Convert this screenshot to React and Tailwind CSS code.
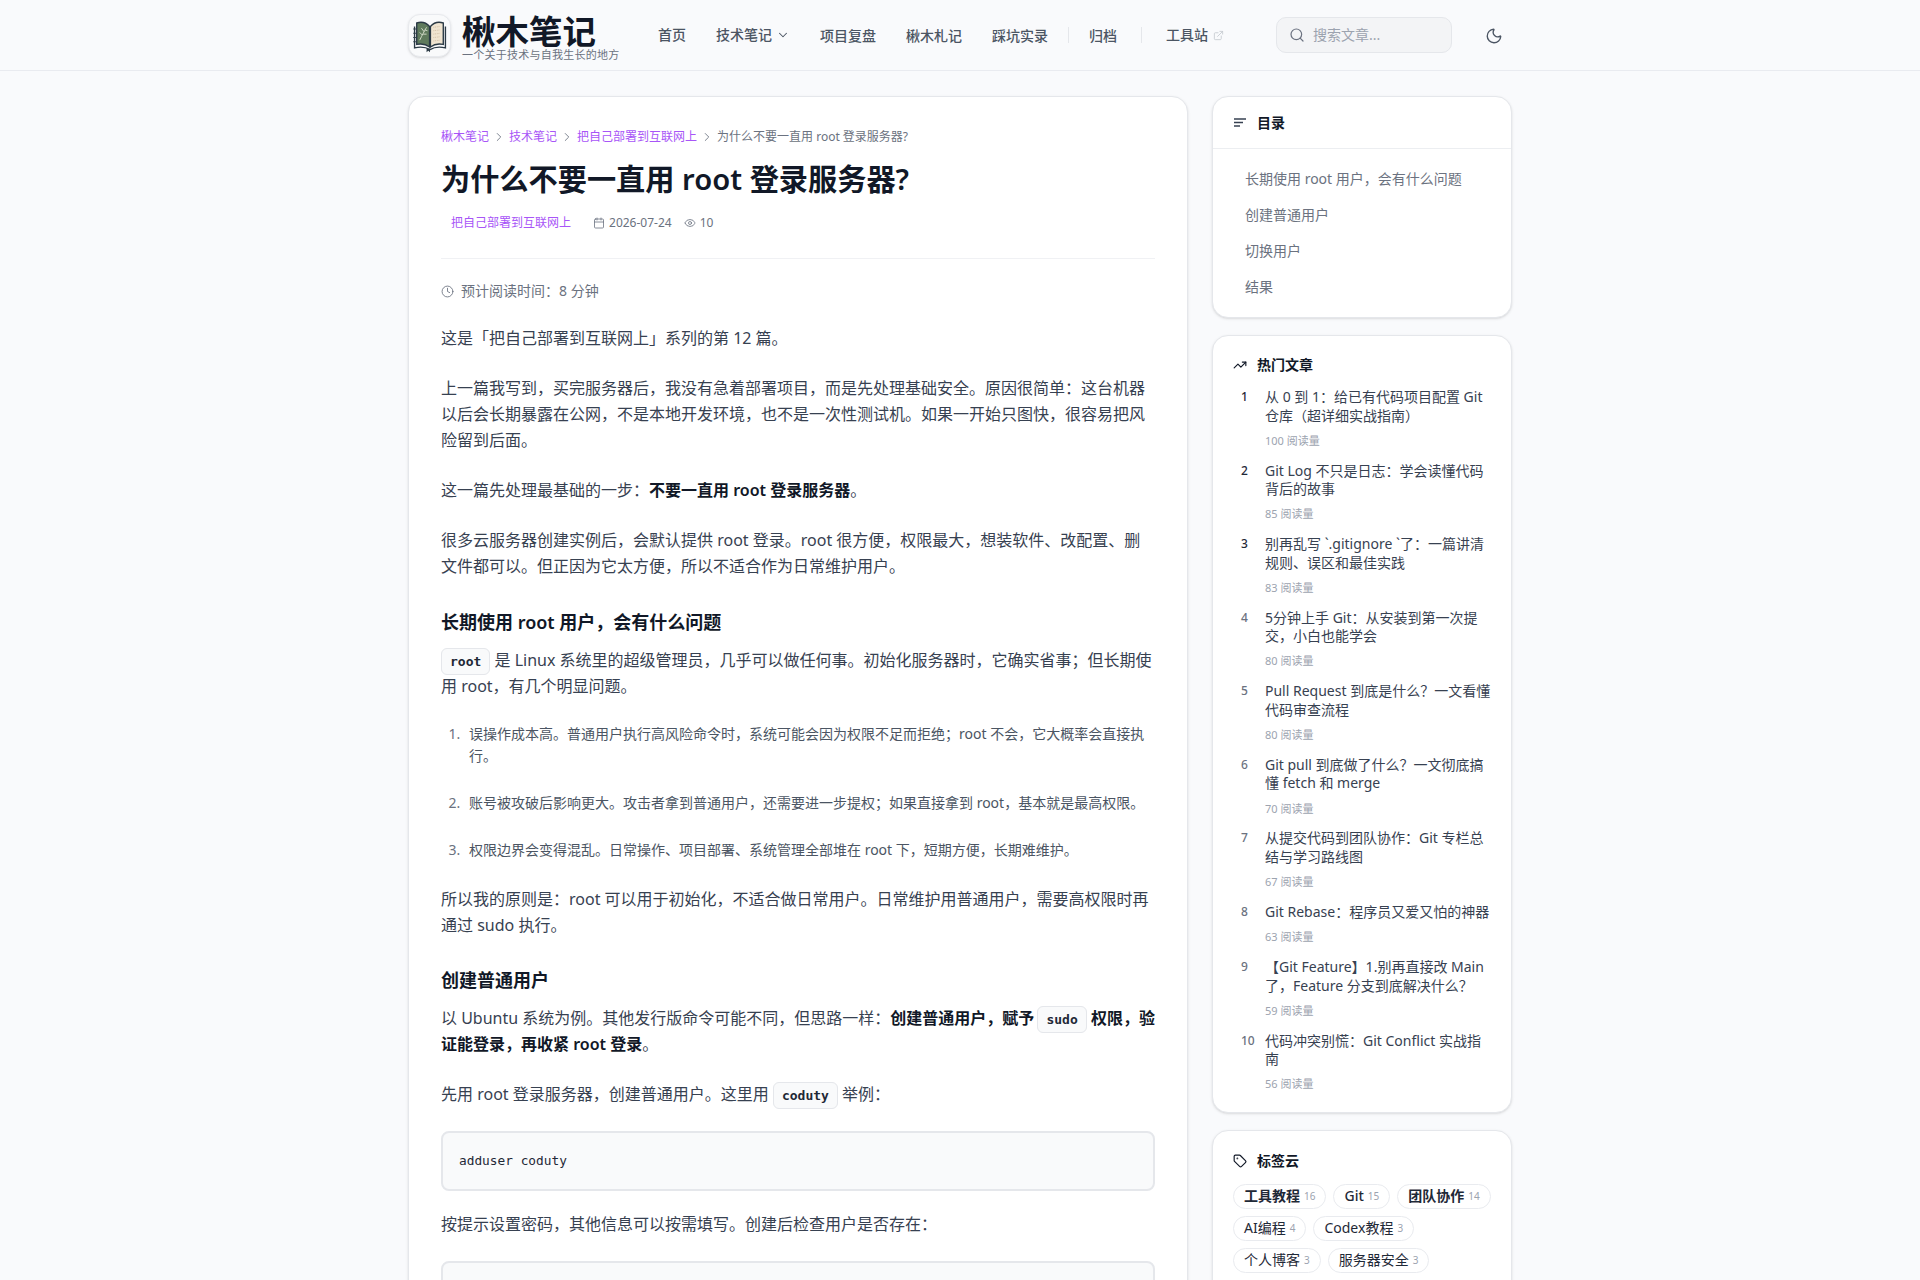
import React from "react";
import { ChevronDown, ChevronRight, ExternalLink, Search, Moon, Calendar, Eye, Clock, TrendingUp, Tag } from "lucide-react";

const FONT = "font-['Noto_Sans','Noto_Sans_CJK_SC',sans-serif]";
const MONO = "font-['DejaVu_Sans_Mono','Noto_Sans_CJK_SC',monospace]";

function Logo() {
  return (
    <svg viewBox="0 0 42 42" className="w-[36px] h-[36px]">
      <path d="M20.5 11 C16 6 10 5.5 5.5 7 L5.5 32 C10 31 16 31.5 20.5 35 Z" fill="#5f7a5c" stroke="#2b3a45" strokeWidth="1.6" />
      <path d="M21.5 11 C26 6 32 5.5 36.5 7 L36.5 32 C32 31 26 31.5 21.5 35 Z" fill="#efe4d0" stroke="#2b3a45" strokeWidth="1.6" />
      <path d="M9 27 C12 21 14 17 17 12" fill="none" stroke="#dfe6d5" strokeWidth="1" />
      <path d="M12 21 L9 18 M14 17 L11 13 M13 20 L17 20 M15 15 L18 16" stroke="#dfe6d5" strokeWidth="1" />
      <path d="M25 12 L33 11 M25 16 L33 15 M25 20 L33 19 M25 24 L33 23 M25 28 L33 27" stroke="#c9b79c" strokeWidth="1" strokeDasharray="1 1" />
      <path d="M3 11 L3 36 C10 34.5 16 35 21 38 C26 35 32 34.5 39 36 L39 11" fill="none" stroke="#2b3a45" strokeWidth="1.6" />
      <path d="M17 37 L17 41 L19 39.5 L21 41 L21 37 Z" fill="#2b3a45" />
      <path d="M1.5 14 L4.5 14 M1.5 19 L4.5 19 M1.5 24 L4.5 24 M1.5 29 L4.5 29" stroke="#2b3a45" strokeWidth="1.2" />
    </svg>
  );
}

function NavItem({ children }) {
  return <a className="text-sm text-[#4b5563] font-medium whitespace-nowrap">{children}</a>;
}

function Header() {
  return (
    <header className="h-[71px] border-b border-[#e9ebf0] bg-[#f9fafc]">
      <div className="w-[1104px] mx-auto h-full flex items-center">
        <div className="w-[43px] h-[43px] rounded-xl border border-[#e8eaee] bg-[#f9fafb] shadow-sm flex items-center justify-center shrink-0">
          <Logo />
        </div>
        <div className="ml-[11px] w-[195px] h-[50px] shrink-0">
          <div className="text-[33.5px] font-bold text-[#111827] leading-[36px] mt-[3px] whitespace-nowrap">楸木笔记</div>
          <div className="text-[11px] text-[#6b7280] leading-[13px] tracking-[0.25px] whitespace-nowrap mt-[-1.5px]">一个关于技术与自我生长的地方</div>
        </div>
        <nav className="flex items-center ml-[1px]">
          <NavItem>首页</NavItem>
          <a className="ml-[30px] flex items-center text-sm text-[#4b5563] font-medium whitespace-nowrap">技术笔记<ChevronDown className="w-[14px] h-[14px] ml-1" strokeWidth={1.8} /></a>
          <span className="ml-[30px]"><NavItem>项目复盘</NavItem></span>
          <span className="ml-[30px]"><NavItem>楸木札记</NavItem></span>
          <span className="ml-[30px]"><NavItem>踩坑实录</NavItem></span>
          <span className="ml-[20px] w-px h-4 bg-[#e5e7eb]" />
          <span className="ml-[20px]"><NavItem>归档</NavItem></span>
          <span className="ml-[24px] w-px h-4 bg-[#e5e7eb]" />
          <a className="ml-[24px] flex items-center text-sm text-[#4b5563] font-medium whitespace-nowrap">工具站<ExternalLink className="w-[11px] h-[11px] ml-[5px] text-[#c4c8cf]" strokeWidth={1.8} /></a>
        </nav>
        <div className="ml-auto flex items-center">
          <div className="w-[176px] h-[36px] rounded-[10px] border border-[#e5e7eb] bg-[#f3f4f6] flex items-center pl-[12px]">
            <Search className="w-4 h-4 text-[#6b7280]" strokeWidth={1.8} />
            <span className="ml-[8px] text-sm text-[#9ca3af]">搜索文章...</span>
          </div>
          <div className="ml-[33px] w-[18px] mr-[9px] mt-[1px] flex items-center justify-center">
            <Moon className="w-[18px] h-[18px] text-[#4b5563]" strokeWidth={1.8} />
          </div>
        </div>
      </div>
    </header>
  );
}

function Code({ children, className = "" }) {
  return (
    <code className={`${MONO} text-[13px] leading-none px-[8px] py-[5px] rounded-md border border-[#e5e7eb] bg-[#f9fafb] text-[#1f2937] font-semibold ${className}`}>{children}</code>
  );
}

function P({ children }) {
  return <p className="text-base leading-[26px] text-[#374151] mb-6">{children}</p>;
}

function H3({ children, className = "mt-[29px]" }) {
  return <h3 className={`text-lg font-semibold leading-7 text-[#111827] mb-[11px] ${className}`}>{children}</h3>;
}

function B({ children }) {
  return <strong className="font-semibold text-[#111827]">{children}</strong>;
}

function Pre({ children }) {
  return (
    <pre className={`${MONO} h-[60px] text-[12.8px] leading-[20px] text-[#1f2937] bg-[#f9fafb] border-2 border-[#e5e7eb] rounded-lg px-4 py-[18px] mb-[20px]`}>{children}</pre>
  );
}

function Li({ children, last }) {
  return <li className={`pl-[5px] ${last ? "" : "mb-[25px]"}`}>{children}</li>;
}

function Article() {
  const crumbs = ["楸木笔记", "技术笔记", "把自己部署到互联网上"];
  return (
    <article className="w-[780px] shrink-0 bg-white border border-[#e5e7eb] rounded-2xl shadow-sm px-8 pt-8">
      <nav className="flex items-center text-xs leading-4 text-[#6b7280]">
        {crumbs.map((c) => (
          <React.Fragment key={c}>
            <a className="text-[#a855f7]">{c}</a>
            <ChevronRight className="w-[14px] h-[14px] mx-[3px]" strokeWidth={1.5} />
          </React.Fragment>
        ))}
        <span>为什么不要一直用 root 登录服务器?</span>
      </nav>
      <h1 className="text-[29.2px] leading-9 font-semibold text-[#111827] mt-[16px]">为什么不要一直用 root 登录服务器?</h1>
      <div className="flex items-center text-xs leading-4 text-[#6b7280] mt-[18px] pb-[27px] border-b border-[#f0f1f4]">
        <span className="ml-[10px] text-[#a855f7]">把自己部署到互联网上</span>
        <Calendar className="w-[12px] h-[12px] ml-[22px]" strokeWidth={1.6} />
        <span className="ml-[4px]">2026-07-24</span>
        <Eye className="w-[12px] h-[12px] ml-[12px]" strokeWidth={1.6} />
        <span className="ml-[4px]">10</span>
      </div>
      <div className="flex items-center text-sm leading-5 text-[#6b7280] mt-[22px] mb-6">
        <Clock className="w-[13px] h-[13px] mr-[7px]" strokeWidth={1.6} />
        预计阅读时间：8 分钟
      </div>
      <P>这是「把自己部署到互联网上」系列的第 12 篇。</P>
      <P>上一篇我写到，买完服务器后，我没有急着部署项目，而是先处理基础安全。原因很简单：这台机器以后会长期暴露在公网，不是本地开发环境，也不是一次性测试机。如果一开始只图快，很容易把风险留到后面。</P>
      <P>这一篇先处理最基础的一步：<B>不要一直用 root 登录服务器</B>。</P>
      <P>很多云服务器创建实例后，会默认提供 root 登录。root 很方便，权限最大，想装软件、改配置、删文件都可以。但正因为它太方便，所以不适合作为日常维护用户。</P>
      <H3>长期使用 root 用户，会有什么问题</H3>
      <P><Code>root</Code> 是 Linux 系统里的超级管理员，几乎可以做任何事。初始化服务器时，它确实省事；但长期使用 root，有几个明显问题。</P>
      <ol className="list-decimal pl-[23px] text-sm leading-[22px] text-[#4b5563] marker:text-[#6b7280] mb-[25px]">
        <Li>误操作成本高。普通用户执行高风险命令时，系统可能会因为权限不足而拒绝；root 不会，它大概率会直接执行。</Li>
        <Li>账号被攻破后影响更大。攻击者拿到普通用户，还需要进一步提权；如果直接拿到 root，基本就是最高权限。</Li>
        <Li last>权限边界会变得混乱。日常操作、项目部署、系统管理全部堆在 root 下，短期方便，长期难维护。</Li>
      </ol>
      <P>所以我的原则是：root 可以用于初始化，不适合做日常用户。日常维护用普通用户，需要高权限时再通过 sudo 执行。</P>
      <H3 className="mt-[28px]">创建普通用户</H3>
      <P>以 Ubuntu 系统为例。其他发行版命令可能不同，但思路一样：<B>创建普通用户，赋予 <Code className="ml-[-1px]">sudo</Code> 权限，验证能登录，再收紧 root 登录</B>。</P>
      <P>先用 root 登录服务器，创建普通用户。这里用 <Code>coduty</Code> 举例：</P>
      <Pre>adduser coduty</Pre>
      <P>按提示设置密码，其他信息可以按需填写。创建后检查用户是否存在：</P>
      <Pre>id coduty</Pre>
    </article>
  );
}

const hot = [
  ["从 0 到 1：给已有代码项目配置 Git 仓库（超详细实战指南）", 100],
  ["Git Log 不只是日志：学会读懂代码背后的故事", 85],
  ["别再乱写 `.gitignore `了：一篇讲清规则、误区和最佳实践", 83],
  ["5分钟上手 Git：从安装到第一次提交，小白也能学会", 80],
  ["Pull Request 到底是什么？一文看懂代码审查流程", 80],
  ["Git pull 到底做了什么？一文彻底搞懂 fetch 和 merge", 70],
  ["从提交代码到团队协作：Git 专栏总结与学习路线图", 67],
  ["Git Rebase：程序员又爱又怕的神器", 63],
  ["【Git Feature】1.别再直接改 Main 了，Feature 分支到底解决什么？", 59],
  ["代码冲突别慌：Git Conflict 实战指南", 56],
];

const tags = [
  [["工具教程", 16, "font-semibold"], ["Git", 15, "font-medium"], ["团队协作", 14, "font-semibold"]],
  [["AI编程", 4, "font-normal"], ["Codex教程", 3, "font-normal"]],
  [["个人博客", 3, "font-normal"], ["服务器安全", 3, "font-normal"]],
];

function Card({ children, className = "" }) {
  return <section className={`bg-white border border-[#e5e7eb] rounded-2xl shadow-sm ${className}`}>{children}</section>;
}

function Sidebar() {
  return (
    <aside className="w-[300px] shrink-0 flex flex-col gap-[17px]">
      <Card>
        <div className="h-[52px] border-b border-[#eceef1] flex items-center pl-[21px]">
          <svg viewBox="0 0 12 9" className="w-[12px] h-[9px]" fill="none" stroke="#374151" strokeWidth="1.5">
            <path d="M0 1 H12 M0 4.5 H9 M0 8 H6" />
          </svg>
          <span className="ml-[11px] text-sm font-semibold text-[#111827]">目录</span>
        </div>
        <ul className="pt-[12px] pb-[12px] pl-[32px] text-sm text-[#6b7280]">
          {["长期使用 root 用户，会有什么问题", "创建普通用户", "切换用户", "结果"].map((t) => (
            <li key={t} className="h-[36px] leading-[36px]">{t}</li>
          ))}
        </ul>
      </Card>
      <Card className="px-[20px] pt-[19px] pb-[20px]">
        <div className="flex items-center h-5">
          <TrendingUp className="w-[14px] h-[14px] text-[#111827]" strokeWidth={2} />
          <span className="ml-[10px] text-sm font-semibold text-[#111827]">热门文章</span>
        </div>
        <ol className="mt-[13px] flex flex-col gap-[12.9px]">
          {hot.map(([t, n], i) => (
            <li key={t} className="flex">
              <span className={`w-[32px] pl-[8px] shrink-0 text-xs leading-[18.6px] font-medium ${i < 3 ? "text-[#1f2937]" : "text-[#6b7280]"}`}>{i + 1}</span>
              <div className="min-w-0 flex-1">
                <div className="text-sm leading-[18.6px] text-[#374151]">{t}</div>
                <div className="text-[11px] leading-4 text-[#9ca3af] mt-[7.5px]">{n} 阅读量</div>
              </div>
            </li>
          ))}
        </ol>
      </Card>
      <Card className="px-[20px] pt-[19.5px] pb-[40px]">
        <div className="flex items-center h-5">
          <Tag className="w-[14px] h-[14px] text-[#111827]" strokeWidth={2} />
          <span className="ml-[10px] text-sm font-semibold text-[#111827]">标签云</span>
        </div>
        <div className="mt-[13px] flex flex-col gap-[7px]">
          {tags.map((row, r) => (
            <div key={r} className="flex gap-[7px]">
              {row.map(([t, n, w]) => (
                <span key={t} className="h-[25px] px-[10px] rounded-full border border-[#e9ebef] flex items-center whitespace-nowrap">
                  <span className={`text-sm text-[#1f2937] ${w}`}>{t}</span>
                  <span className="ml-[4px] text-[10px] text-[#9ca3af]">{n}</span>
                </span>
              ))}
            </div>
          ))}
        </div>
      </Card>
    </aside>
  );
}

export default function App() {
  return (
    <div className={`${FONT} h-[1280px] overflow-hidden bg-[#f9fafc]`}>
      <Header />
      <main className="w-[1104px] mx-auto mt-[25px] flex items-start gap-6">
        <Article />
        <Sidebar />
      </main>
    </div>
  );
}
